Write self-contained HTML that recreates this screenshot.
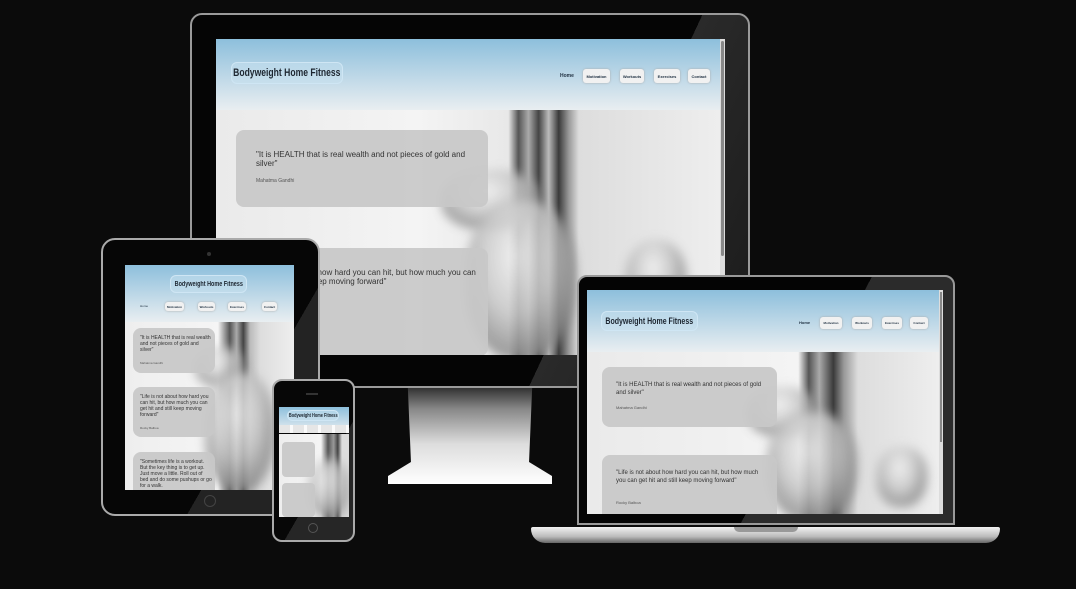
<!DOCTYPE html>
<html><head><meta charset="utf-8"><style>
*{margin:0;padding:0;box-sizing:border-box}
body{width:1076px;height:589px;background:#0b0b0b;position:relative;overflow:hidden;font-family:"Liberation Sans",sans-serif}
.a{position:absolute}
.hdr{position:absolute;left:0;right:0;top:0;background:linear-gradient(#8dbfdc,#e9eef1)}
.img{position:absolute;left:0;right:0;bottom:0;background:linear-gradient(90deg,#eaeaea 0%,#f4f4f4 40%,#e8e8e8 58%,#555 60%,#aaa 62%,#444 64%,#bbb 66%,#3a3a3a 68%,#999 70%,#ddd 72%,#eee 100%);overflow:hidden}
.fig{position:absolute;border-radius:45%;background:radial-gradient(ellipse at 45% 35%,#f2f2f2 0%,#c8c8c8 40%,#8a8a8a 70%,rgba(150,150,150,0) 100%);filter:blur(5px);opacity:.85}
.logo{position:absolute;border:1px solid #cfe6f4;border-radius:6px;background:rgba(200,225,240,.5);color:#1d2630;font-weight:bold;white-space:nowrap;display:flex;align-items:center;justify-content:center;overflow:hidden}
.logo span{display:inline-block;transform:scaleX(.78)}
.nav{position:absolute;background:#f1f1f1;border-radius:3px;color:#234;font-weight:bold;display:flex;align-items:center;justify-content:center;box-shadow:0 0 2px #aaa;white-space:nowrap;overflow:hidden}
.q{position:absolute;background:rgba(200,200,200,.92);border-radius:8px;color:#333}
.q p{position:absolute}
.q small{position:absolute;color:#555}
</style></head><body>

<!-- MONITOR -->
<div class="a" style="left:388px;top:384px;width:164px;height:100px;background:linear-gradient(#222,#888 25%,#ddd 60%,#fff);clip-path:polygon(12% 0,88% 0,86% 78%,100% 92%,100% 100%,0 100%,0 92%,14% 78%)"></div>
<div class="a" style="left:190px;top:13px;width:560px;height:375px;background:linear-gradient(115deg,#050505 70%,#2a2a2a 70%,#1a1a1a);border:2px solid #9a9a9a;border-radius:12px"></div>
<div class="a" style="left:216px;top:39px;width:509px;height:316px;overflow:hidden;background:#eee">
  <div class="hdr" style="height:71px"></div>
  <div class="logo" style="left:15px;top:23px;width:112px;height:22px;font-size:11px"><span>Bodyweight Home Fitness</span></div>
  <div class="a" style="left:344px;top:34px;font-size:5px;font-weight:bold;color:#234">Home</div>
  <div class="nav" style="left:367px;top:30px;width:27px;height:14px;font-size:4px">Motivation</div>
  <div class="nav" style="left:404px;top:30px;width:24px;height:14px;font-size:4px">Workouts</div>
  <div class="nav" style="left:438px;top:30px;width:26px;height:14px;font-size:4px">Exercises</div>
  <div class="nav" style="left:472px;top:30px;width:22px;height:14px;font-size:4px">Contact</div>
  <div class="img" style="top:71px;right:5px">
    <div class="fig" style="left:225px;top:60px;width:100px;height:60px"></div>
    <div class="fig" style="left:250px;top:90px;width:110px;height:160px"></div>
    <div class="fig" style="left:410px;top:130px;width:60px;height:80px"></div>
  </div>
  <div class="a" style="right:0;top:0;width:5px;height:316px;background:#ddd"><div style="margin:2px 1px;height:215px;background:#888;border-radius:2px"></div></div>
  <div class="q" style="left:20px;top:91px;width:252px;height:77px">
    <p style="left:20px;top:20px;width:220px;font-size:8px;line-height:9px">"It is HEALTH that is real wealth and not pieces of gold and silver"</p>
    <small style="left:20px;top:48px;font-size:5px">Mahatma Gandhi</small></div>
  <div class="q" style="left:20px;top:209px;width:252px;height:108px">
    <p style="left:20px;top:20px;width:225px;font-size:8px;line-height:9px">"Life is not about how hard you can hit, but how much you can get hit and still keep moving forward"</p></div>
</div>

<!-- TABLET -->
<div class="a" style="left:101px;top:238px;width:219px;height:278px;background:linear-gradient(120deg,#060606 65%,#232323 65%);border:2px solid #aaa;border-radius:14px"></div>
<div class="a" style="left:207px;top:252px;width:4px;height:4px;border-radius:50%;background:#333"></div>
<div class="a" style="left:204px;top:495px;width:12px;height:12px;border-radius:50%;border:1px solid #444"></div>
<div class="a" style="left:125px;top:265px;width:169px;height:225px;overflow:hidden">
  <div class="hdr" style="height:57px"></div>
  <div class="logo" style="left:45px;top:10px;width:77px;height:18px;font-size:7px"><span>Bodyweight Home Fitness</span></div>
  <div class="a" style="left:15px;top:39px;font-size:3px;color:#234">Home</div>
  <div class="nav" style="left:40px;top:37px;width:19px;height:9px;font-size:3px">Motivation</div>
  <div class="nav" style="left:73px;top:37px;width:17px;height:9px;font-size:3px">Workouts</div>
  <div class="nav" style="left:103px;top:37px;width:18px;height:9px;font-size:3px">Exercises</div>
  <div class="nav" style="left:137px;top:37px;width:15px;height:9px;font-size:3px">Contact</div>
  <div class="img" style="top:57px;background:linear-gradient(90deg,#eee 0%,#f5f5f5 55%,#555 62%,#aaa 66%,#444 70%,#bbb 74%,#ddd 80%,#eee)">
    <div class="fig" style="left:70px;top:25px;width:50px;height:40px"></div>
    <div class="fig" style="left:80px;top:50px;width:70px;height:120px"></div>
  </div>
  <div class="q" style="left:8px;top:63px;width:82px;height:45px">
    <p style="left:7px;top:7px;width:72px;font-size:5px;line-height:6px">"It is HEALTH that is real wealth and not pieces of gold and silver"</p>
    <small style="left:7px;top:33px;font-size:3px">Mahatma Gandhi</small></div>
  <div class="q" style="left:8px;top:122px;width:82px;height:50px">
    <p style="left:7px;top:7px;width:72px;font-size:5px;line-height:6px">"Life is not about how hard you can hit, but how much you can get hit and still keep moving forward"</p>
    <small style="left:7px;top:39px;font-size:3px">Rocky Balboa</small></div>
  <div class="q" style="left:8px;top:187px;width:82px;height:50px">
    <p style="left:7px;top:7px;width:72px;font-size:5px;line-height:6px">"Sometimes life is a workout. But the key thing is to get up. Just move a little. Roll out of bed and do some pushups or go for a walk.</p></div>
</div>

<!-- PHONE -->
<div class="a" style="left:272px;top:379px;width:83px;height:163px;background:linear-gradient(120deg,#070707 60%,#262626 60%);border:2px solid #aaa;border-radius:10px"></div>
<div class="a" style="left:306px;top:393px;width:12px;height:2px;background:#333"></div>
<div class="a" style="left:308px;top:523px;width:10px;height:10px;border-radius:50%;border:1px solid #555"></div>
<div class="a" style="left:279px;top:407px;width:70px;height:110px;overflow:hidden">
  <div class="hdr" style="height:25px"></div>
  <div class="logo" style="left:8px;top:3px;width:52px;height:11px;font-size:5px"><span>Bodyweight Home Fitness</span></div>
  <div class="a" style="left:0;top:18px;width:70px;height:8px;background:repeating-linear-gradient(90deg,#e6e6e6 0 11px,#fafafa 11px 14px)"></div>
  <div class="img" style="top:27px;background:linear-gradient(90deg,#eee,#f4f4f4 60%,#555 70%,#999 78%,#444 84%,#ddd 90%)">
    <div class="fig" style="left:30px;top:25px;width:40px;height:60px"></div>
  </div>
  <div class="q" style="left:3px;top:35px;width:33px;height:35px;border-radius:4px"></div>
  <div class="q" style="left:3px;top:76px;width:33px;height:34px;border-radius:4px"></div>
</div>

<!-- LAPTOP -->
<div class="a" style="left:577px;top:275px;width:378px;height:250px;background:linear-gradient(118deg,#040404 58%,#2b2b2b 58%);border:2px solid #999;border-radius:10px 10px 0 0"></div>
<div class="a" style="left:531px;top:527px;width:469px;height:16px;background:linear-gradient(#f2f2f2,#bbb 60%,#666);border-radius:2px 2px 14px 14px"></div>
<div class="a" style="left:734px;top:527px;width:64px;height:5px;background:#999;border-radius:0 0 5px 5px"></div>
<div class="a" style="left:587px;top:290px;width:356px;height:224px;overflow:hidden">
  <div class="hdr" style="height:62px"></div>
  <div class="logo" style="left:14px;top:21px;width:97px;height:20px;font-size:9px"><span>Bodyweight Home Fitness</span></div>
  <div class="a" style="left:212px;top:30px;font-size:4px;font-weight:bold;color:#234">Home</div>
  <div class="nav" style="left:233px;top:27px;width:22px;height:12px;font-size:3px">Motivation</div>
  <div class="nav" style="left:265px;top:27px;width:20px;height:12px;font-size:3px">Workouts</div>
  <div class="nav" style="left:295px;top:27px;width:20px;height:12px;font-size:3px">Exercises</div>
  <div class="nav" style="left:323px;top:27px;width:18px;height:12px;font-size:3px">Contact</div>
  <div class="img" style="top:62px;right:4px;background:linear-gradient(90deg,#eaeaea 0%,#f4f4f4 60%,#555 63%,#aaa 66%,#3a3a3a 70%,#999 73%,#ddd 77%,#eee 100%)">
    <div class="fig" style="left:160px;top:35px;width:70px;height:50px"></div>
    <div class="fig" style="left:180px;top:60px;width:90px;height:110px"></div>
    <div class="fig" style="left:290px;top:95px;width:50px;height:60px"></div>
  </div>
  <div class="a" style="right:0;top:0;width:4px;height:224px;background:#ddd"><div style="margin:2px 1px;height:150px;background:#888"></div></div>
  <div class="q" style="left:15px;top:77px;width:175px;height:60px">
    <p style="left:14px;top:14px;width:150px;font-size:6px;line-height:8px">"It is HEALTH that is real wealth and not pieces of gold and silver"</p>
    <small style="left:14px;top:38px;font-size:4px">Mahatma Gandhi</small></div>
  <div class="q" style="left:15px;top:165px;width:175px;height:70px">
    <p style="left:14px;top:14px;width:150px;font-size:6px;line-height:8px">"Life is not about how hard you can hit, but how much you can get hit and still keep moving forward"</p>
    <small style="left:14px;top:45px;font-size:4px">Rocky Balboa</small></div>
</div>
</body></html>
